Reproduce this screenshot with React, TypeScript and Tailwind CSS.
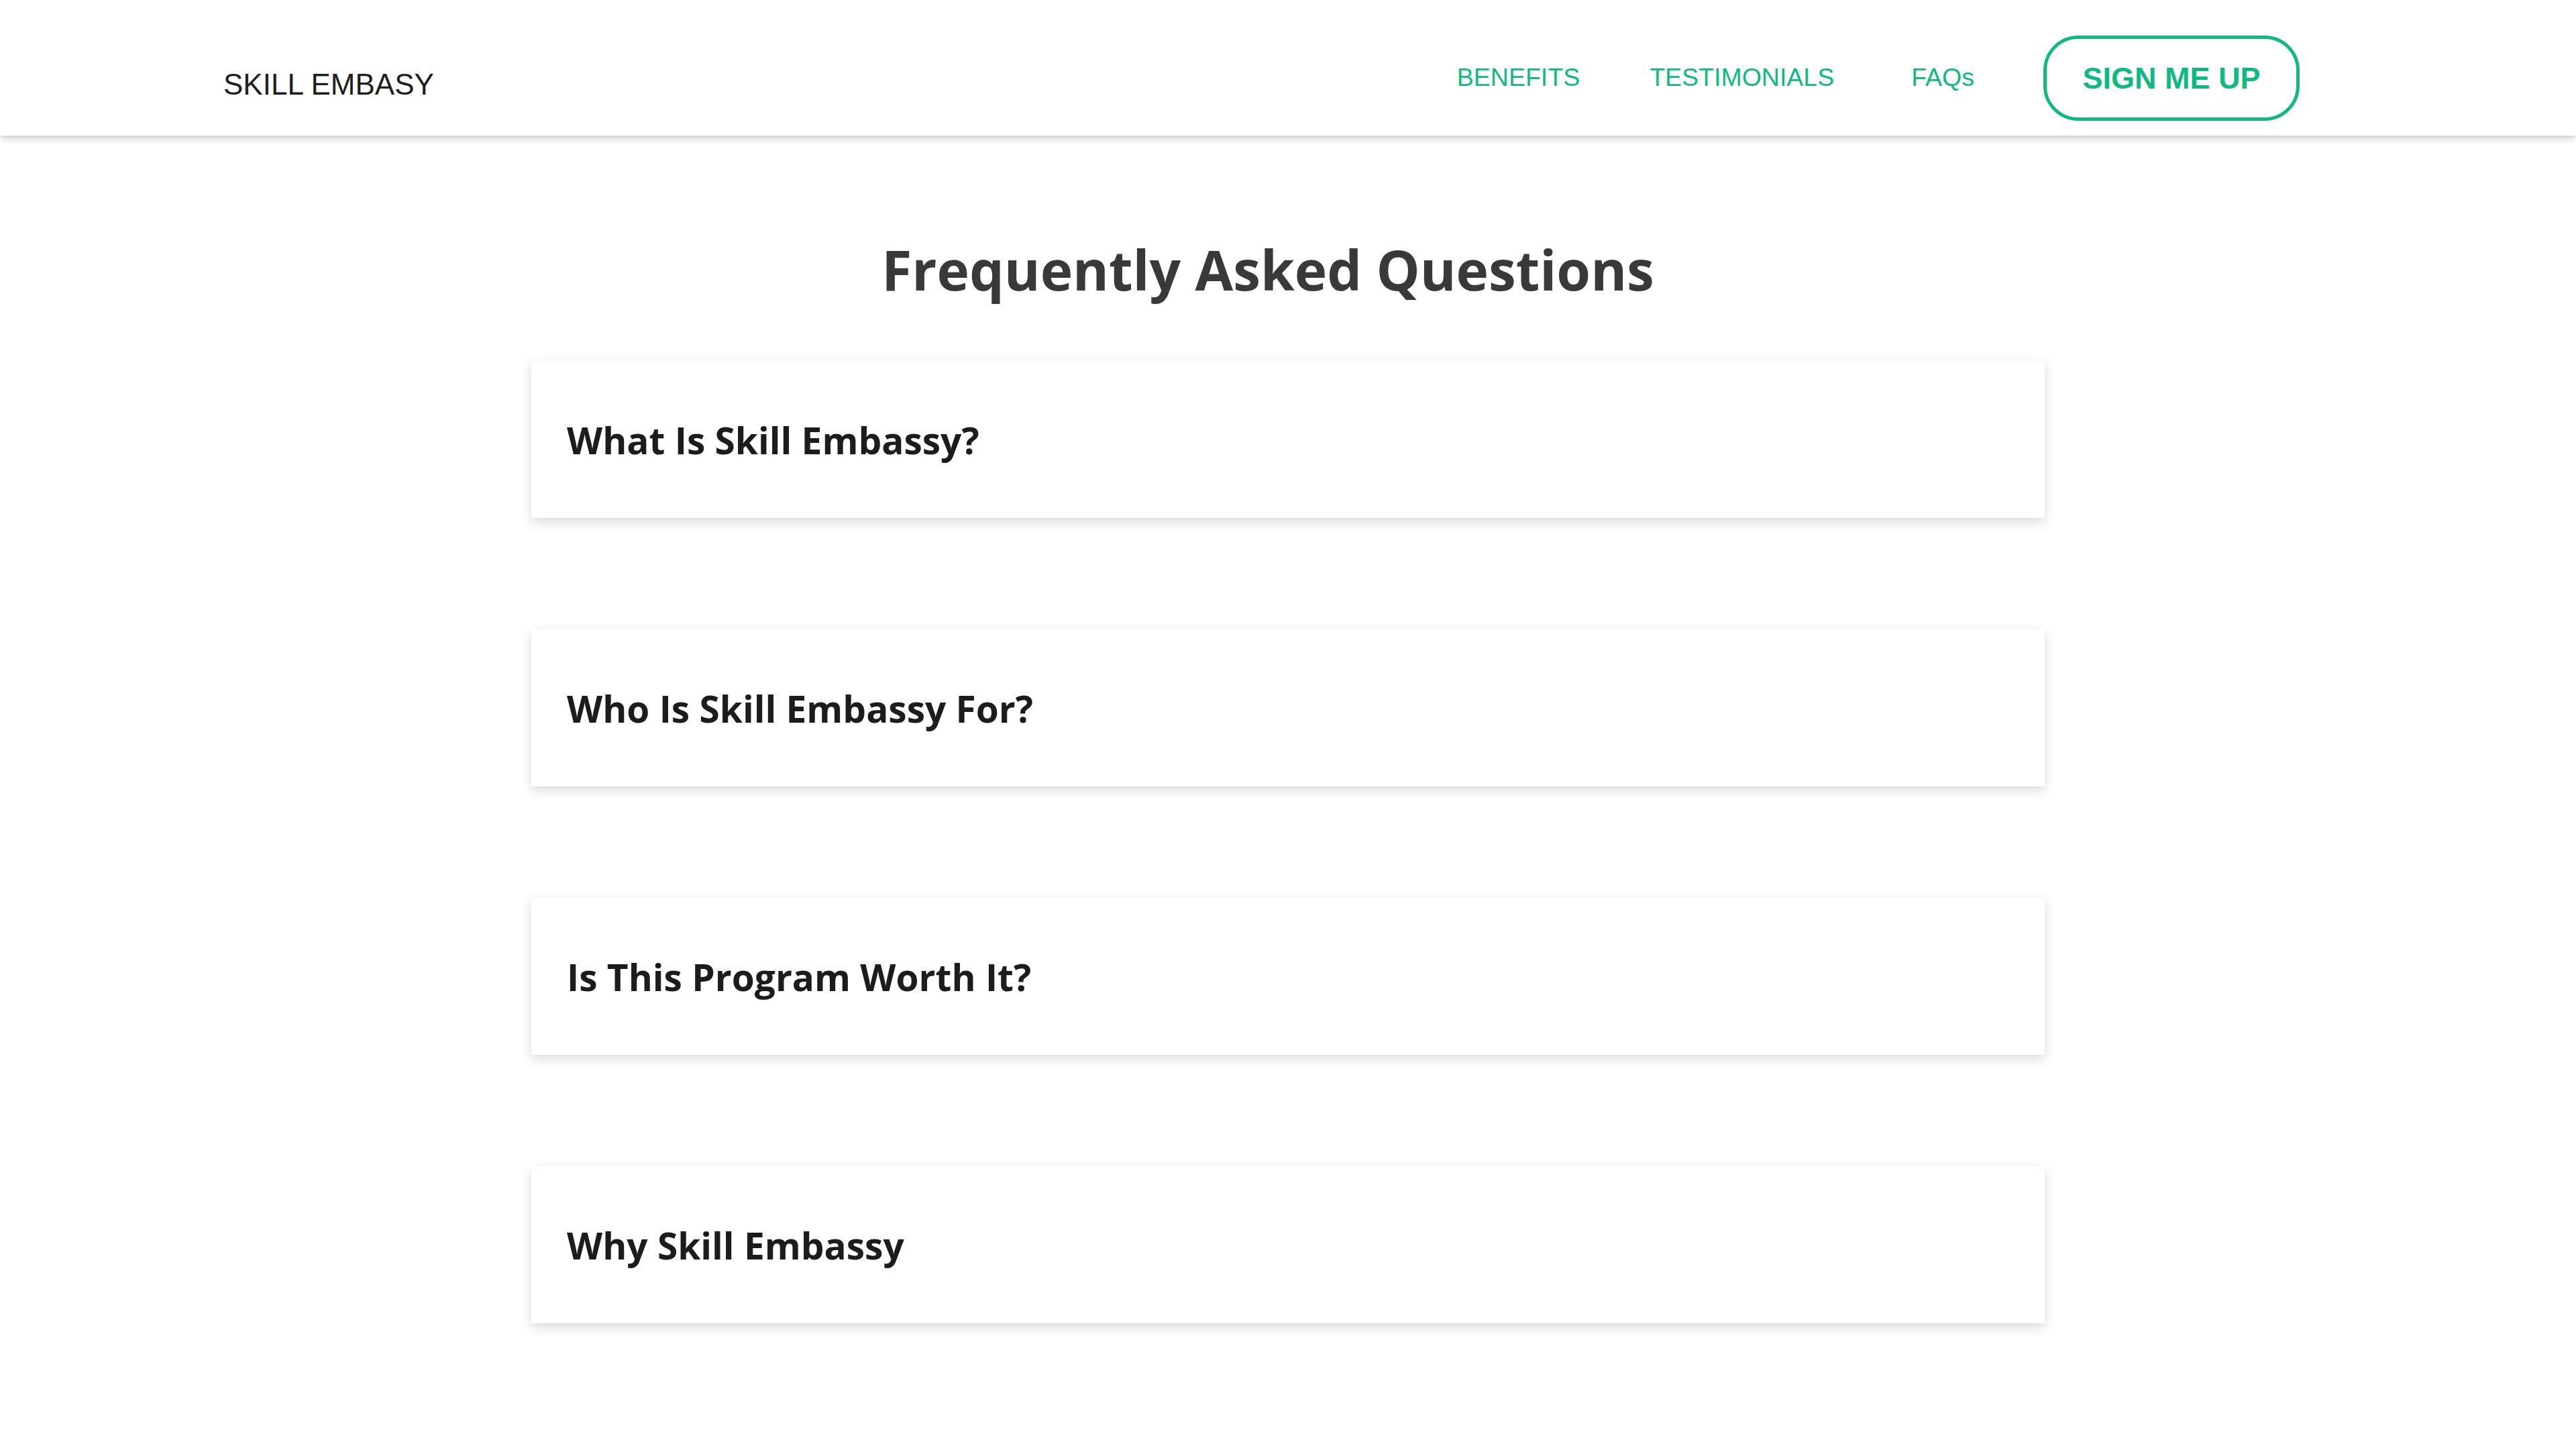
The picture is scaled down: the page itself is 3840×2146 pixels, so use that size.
const questions = [
  'What Is Skill Embassy?',
  'Who Is Skill Embassy For?',
  'Is This Program Worth It?',
  'Why Skill Embassy',
];

function Header() {
  return (
    <header className="relative z-10 flex h-[202px] items-center bg-white pt-[30px] pl-[333px] pr-[412px] shadow-[0_5px_10px_rgba(0,0,0,0.18)] font-['Liberation_Sans',Arial,sans-serif]">
      <div className="pt-[20px] text-[44px] leading-none text-[#1e1e1e]">SKILL EMBASY</div>
      <nav className="ml-auto flex items-center text-[37.5px] leading-none text-[#10b981]">
        <a href="#benefits">BENEFITS</a>
        <a href="#testimonials" className="ml-[104px]">TESTIMONIALS</a>
        <a href="#faqs" className="ml-[115px]">FAQs</a>
        <button className="ml-[103px] flex h-[127px] w-[382px] items-center justify-center rounded-[52px] border-[5px] border-[#10b981] text-[45px] font-bold text-[#10b981]">
          SIGN ME UP
        </button>
      </nav>
    </header>
  );
}

export default function App() {
  return (
    <div className="min-h-screen bg-white">
      <Header />
      <main className="font-['Open_Sans','Noto_Sans',sans-serif]">
        <h1 className="pt-[158px] pr-[60px] text-center text-[82px] font-bold leading-none text-[#393939]">
          Frequently Asked Questions
        </h1>
        <div className="mx-auto mt-[96px] flex w-[2256px] flex-col gap-[166px] pb-[160px]">
          {questions.map((q) => (
            <div
              key={q}
              className="flex h-[234px] items-center bg-white pl-[53px] shadow-[0_6px_16px_rgba(0,0,0,0.15)]"
            >
              <h2 className="text-[55px] font-bold leading-none text-[#1c1c1c]">{q}</h2>
            </div>
          ))}
        </div>
      </main>
    </div>
  );
}
